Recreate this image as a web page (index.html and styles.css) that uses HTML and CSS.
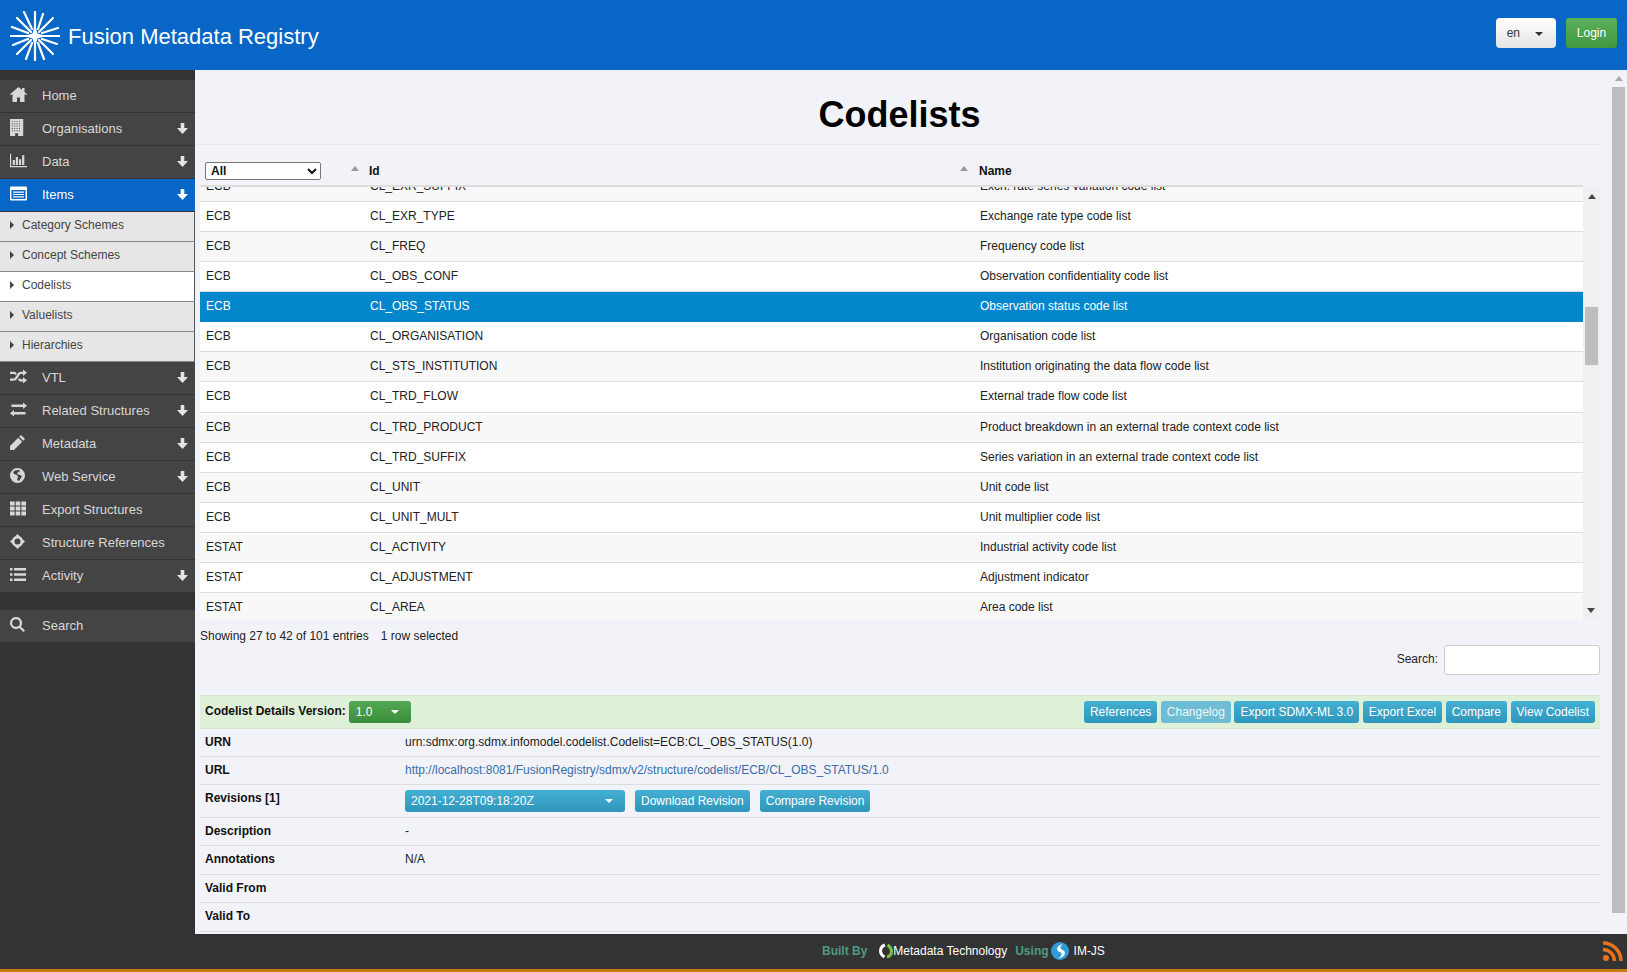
FILE: index.html
```html
<!DOCTYPE html>
<html lang="en">
<head>
<meta charset="UTF-8">
<title>Fusion Metadata Registry</title>
<link rel="stylesheet" href="styles.css">
</head>
<body>
<svg class="sprite" width="0" height="0">
  <symbol id="i-home" viewBox="0 0 17 15" preserveAspectRatio="xMinYMid meet"><path d="M8.500 0 0 7.300l.9 1L2.500 7V15H7v-4.500h3V15h4.500V7l1.600 1.300.9-1-2.500-2.200V1H12v2z"/></symbol>
  <symbol id="i-building" viewBox="0 0 14 18" preserveAspectRatio="xMinYMid meet"><path fill-rule="evenodd" d="M0 0h14v18H0zM2 2v1h1V2zm2.500 0v1h1V2zm2.500 0v1h1V2zm2.500 0v1h1V2zM2 4.500v1h1v-1zm2.500 0v1h1v-1zm2.500 0v1h1v-1zm2.500 0v1h1v-1zM2 7v1h1V7zm2.500 0v1h1V7zM7 7v1h1V7zm2.500 0v1h1V7zM2 9.500v1h1v-1zm2.500 0v1h1v-1zm2.500 0v1h1v-1zm2.500 0v1h1v-1zM2 12v1h1v-1zm2.500 0v1h1v-1zm2.500 0v1h1v-1zm2.500 0v1h1v-1zM5.500 15v3h3v-3z"/></symbol>
  <symbol id="i-chart" viewBox="0 0 19 15" preserveAspectRatio="xMinYMid meet"><path d="M0 0h1.300v13.700H19V15H0zM3 7h2.500v5.500H3zM6.500 3.500H9v9H6.500zM10 6h2.500v6.500H10zM13.500 1.500H16v11h-2.500z"/></symbol>
  <symbol id="i-listalt" viewBox="0 0 17 14" preserveAspectRatio="xMinYMid meet"><path fill-rule="evenodd" d="M1 0h15a1 1 0 0 1 1 1v12a1 1 0 0 1-1 1H1a1 1 0 0 1-1-1V1a1 1 0 0 1 1-1zM1.500 3.500V12.500h14V3.500zM3 5h11v1.200H3zM3 7.400h11v1.200H3zM3 9.800h11V11H3z"/></symbol>
  <symbol id="i-random" viewBox="0 0 17 14" preserveAspectRatio="xMinYMid meet"><path d="M13 0l4 3.200-4 3.300V4.500h-1.700c-1 0-1.500.6-2.100 1.500L7.500 8.800C6.600 10.200 5.500 11.300 3.800 11.300H0V9h3.500c.9 0 1.400-.6 2-1.500L7.200 4.700C8.100 3.300 9.200 2.200 11 2.200h2zM0 2.200h3.800c1.300 0 2.200.6 3 1.500L5.400 5.700C5 5 4.400 4.500 3.500 4.500H0zM13 7.500l4 3.200L13 14v-2h-2c-1.300 0-2.200-.6-3-1.500l1.400-2c.4.700 1 1.200 1.900 1.200H13z"/></symbol>
  <symbol id="i-exchange" viewBox="0 0 17 14" preserveAspectRatio="xMinYMid meet"><path d="M13 0l4 3.200-4 3.200V4.500H1.500V2H13zM4 7.500v1.900h11.500v2.500H4V14L0 10.700z"/></symbol>
  <symbol id="i-pencil" viewBox="0 0 17 15" preserveAspectRatio="xMinYMid meet"><path d="M11 0l4 4-1.800 1.800-4-4zM8.200 2.800l4 4L4 15H0v-4z"/></symbol>
  <symbol id="i-globe" viewBox="0 0 17 15" preserveAspectRatio="xMinYMid meet"><path fill-rule="evenodd" d="M7.500 0a7.500 7.500 0 1 1 0 15 7.500 7.500 0 0 1 0-15zM5 2.500 3 4l1 2 3 1 1 2-1 3 2 1 2-3 1-2-2-1-3-1 1-2 2-.5L9 1.800z"/></symbol>
  <symbol id="i-th" viewBox="0 0 17 14" preserveAspectRatio="xMinYMid meet"><path d="M0 0h4.600v4H0zM5.700 0h4.600v4H5.700zM11.400 0H16v4h-4.600zM0 5h4.600v4H0zM5.700 5h4.600v4H5.700zM11.400 5H16v4h-4.600zM0 10h4.600v4H0zM5.700 10h4.600v4H5.700zM11.400 10H16v4h-4.600z"/></symbol>
  <symbol id="i-move" viewBox="0 0 17 15" preserveAspectRatio="xMinYMid meet"><path fill-rule="evenodd" d="M7.500 0l2.200 2.300A5.500 5.500 0 0 1 12.700 5.300L15 7.500l-2.300 2.200a5.500 5.500 0 0 1-3 3L7.500 15l-2.200-2.300a5.500 5.500 0 0 1-3-3L0 7.500l2.300-2.200a5.500 5.500 0 0 1 3-3zM7.500 4.500a3 3 0 1 0 0 6 3 3 0 0 0 0-6z"/></symbol>
  <symbol id="i-list" viewBox="0 0 17 13" preserveAspectRatio="xMinYMid meet"><path d="M0 0h2.500v2.500H0zM4 0h12v2.500H4zM0 5.200h2.500v2.500H0zM4 5.200h12v2.500H4zM0 10.500h2.500V13H0zM4 10.500h12V13H4z"/></symbol>
  <symbol id="i-search" viewBox="0 0 17 15" preserveAspectRatio="xMinYMid meet"><path fill-rule="evenodd" d="M6 0a6 6 0 0 1 4.900 9.500L15 13.400 13.400 15l-4-4.100A6 6 0 1 1 6 0zm0 2.200a3.800 3.800 0 1 0 0 7.600 3.800 3.800 0 0 0 0-7.600z"/></symbol>
  <symbol id="i-down" viewBox="0 0 11 11"><path d="M3.700 0h3.600v5H11l-5.500 6L0 5h3.700z"/></symbol>
</svg>

<div class="header">
  <div class="brand">
    <svg class="logo" viewBox="0 0 50 50">
      <g stroke="#fff" stroke-width="2.200" stroke-linecap="round">
        <path d="M25 20V0M25 30V50M20 25H0M30 25H50"/>
        <path d="M21 21 7 7M29 21 43 7M21 29 7 43M29 29 43 43"/>
        <path d="M22 18 14 1M28 18 33 3M18 22 2 16M32 22 48 17M18 28 3 34M32 28 47 33M22 32 16 48M28 32 34 48"/>
      </g>
      <path fill="#fff" d="M25 14 27.500 22.500 36 25 27.500 27.500 25 36 22.500 27.500 14 25 22.500 22.500z"/>
    </svg>
    <span class="brand-name">Fusion Metadata Registry</span>
  </div>
  <div class="header-actions">
    <button class="lang-btn">en <span class="caret caret-dark"></span></button>
    <button class="login-btn">Login</button>
  </div>
</div>

<div class="layout">
  <div class="sidebar">
    <a class="nav-item"><svg class="nav-icon"><use href="#i-home"/></svg>Home</a>
    <a class="nav-item"><svg class="nav-icon"><use href="#i-building"/></svg>Organisations<svg class="nav-arrow"><use href="#i-down"/></svg></a>
    <a class="nav-item"><svg class="nav-icon"><use href="#i-chart"/></svg>Data<svg class="nav-arrow"><use href="#i-down"/></svg></a>
    <a class="nav-item active"><svg class="nav-icon"><use href="#i-listalt"/></svg>Items<svg class="nav-arrow"><use href="#i-down"/></svg></a>
    <a class="sub-item">Category Schemes</a>
    <a class="sub-item">Concept Schemes</a>
    <a class="sub-item current">Codelists</a>
    <a class="sub-item">Valuelists</a>
    <a class="sub-item">Hierarchies</a>
    <a class="nav-item"><svg class="nav-icon"><use href="#i-random"/></svg>VTL<svg class="nav-arrow"><use href="#i-down"/></svg></a>
    <a class="nav-item"><svg class="nav-icon"><use href="#i-exchange"/></svg>Related Structures<svg class="nav-arrow"><use href="#i-down"/></svg></a>
    <a class="nav-item"><svg class="nav-icon"><use href="#i-pencil"/></svg>Metadata<svg class="nav-arrow"><use href="#i-down"/></svg></a>
    <a class="nav-item"><svg class="nav-icon"><use href="#i-globe"/></svg>Web Service<svg class="nav-arrow"><use href="#i-down"/></svg></a>
    <a class="nav-item"><svg class="nav-icon"><use href="#i-th"/></svg>Export Structures</a>
    <a class="nav-item"><svg class="nav-icon"><use href="#i-move"/></svg>Structure References</a>
    <a class="nav-item"><svg class="nav-icon"><use href="#i-list"/></svg>Activity<svg class="nav-arrow"><use href="#i-down"/></svg></a>
    <a class="nav-item nav-search"><svg class="nav-icon"><use href="#i-search"/></svg>Search</a>
  </div>

  <div class="main">
    <div class="content">
      <h1 class="page-title">Codelists</h1>

      <div class="table-wrap">
        <div class="table-area">
          <div class="table-head">
            <div class="head-cell">
              <select class="type-filter"><option>All</option></select>
              <span class="sort-up"></span>
            </div>
            <div class="head-cell">Id<span class="sort-up"></span></div>
            <div class="head-cell head-name">Name</div>
          </div>
          <div class="table-body">
            <div class="rows">
              <div class="row alt"><span>ECB</span><span>CL_EXR_SUFFIX</span><span>Exch. rate series variation code list</span></div>
              <div class="row"><span>ECB</span><span>CL_EXR_TYPE</span><span>Exchange rate type code list</span></div>
              <div class="row alt"><span>ECB</span><span>CL_FREQ</span><span>Frequency code list</span></div>
              <div class="row"><span>ECB</span><span>CL_OBS_CONF</span><span>Observation confidentiality code list</span></div>
              <div class="row selected"><span>ECB</span><span>CL_OBS_STATUS</span><span>Observation status code list</span></div>
              <div class="row"><span>ECB</span><span>CL_ORGANISATION</span><span>Organisation code list</span></div>
              <div class="row alt"><span>ECB</span><span>CL_STS_INSTITUTION</span><span>Institution originating the data flow code list</span></div>
              <div class="row row-tall"><span>ECB</span><span>CL_TRD_FLOW</span><span>External trade flow code list</span></div>
              <div class="row alt"><span>ECB</span><span>CL_TRD_PRODUCT</span><span>Product breakdown in an external trade context code list</span></div>
              <div class="row"><span>ECB</span><span>CL_TRD_SUFFIX</span><span>Series variation in an external trade context code list</span></div>
              <div class="row alt"><span>ECB</span><span>CL_UNIT</span><span>Unit code list</span></div>
              <div class="row"><span>ECB</span><span>CL_UNIT_MULT</span><span>Unit multiplier code list</span></div>
              <div class="row alt"><span>ESTAT</span><span>CL_ACTIVITY</span><span>Industrial activity code list</span></div>
              <div class="row"><span>ESTAT</span><span>CL_ADJUSTMENT</span><span>Adjustment indicator</span></div>
              <div class="row alt"><span>ESTAT</span><span>CL_AREA</span><span>Area code list</span></div>
            </div>
          </div>
        </div>
        <div class="table-scroll">
          <span class="arrow-up"></span>
          <span class="table-thumb"></span>
          <span class="arrow-down"></span>
        </div>
      </div>

      <div class="table-info">
        <div class="info-line">Showing 27 to 42 of 101 entries<span class="info-selected">1 row selected</span></div>
        <div class="search-line">
          <label class="search-label" for="tableSearch">Search:</label>
          <input id="tableSearch" class="search-input" type="text">
        </div>
      </div>

      <div class="details-bar">
        <div class="details-title">
          <b>Codelist Details Version:</b>
          <button class="btn btn-green version-btn">1.0<span class="caret"></span></button>
        </div>
        <div class="details-actions">
          <button class="btn btn-info">References</button>
          <button class="btn btn-info btn-disabled">Changelog</button>
          <button class="btn btn-info">Export SDMX-ML 3.0</button>
          <button class="btn btn-info">Export Excel</button>
          <button class="btn btn-info">Compare</button>
          <button class="btn btn-info">View Codelist</button>
        </div>
      </div>
      <div class="detail-row"><b>URN</b><span>urn:sdmx:org.sdmx.infomodel.codelist.Codelist=ECB:CL_OBS_STATUS(1.0)</span></div>
      <div class="detail-row"><b>URL</b><a class="detail-link">http://localhost:8081/FusionRegistry/sdmx/v2/structure/codelist/ECB/CL_OBS_STATUS/1.0</a></div>
      <div class="detail-row detail-revisions"><b>Revisions [1]</b>
        <div class="revision-actions">
          <button class="btn btn-info revision-btn">2021-12-28T09:18:20Z<span class="caret"></span></button>
          <button class="btn btn-info">Download Revision</button>
          <button class="btn btn-info">Compare Revision</button>
        </div>
      </div>
      <div class="detail-row"><b>Description</b><span>-</span></div>
      <div class="detail-row detail-tall"><b>Annotations</b><span>N/A</span></div>
      <div class="detail-row"><b>Valid From</b><span></span></div>
      <div class="detail-row detail-tall"><b>Valid To</b><span></span></div>
    </div>

    <div class="page-scroll">
      <span class="page-arrow"></span>
      <span class="page-thumb"></span>
    </div>
  </div>
</div>

<div class="footer">
  <span class="footer-muted">Built By</span>
  <svg class="mt-logo" viewBox="0 0 14 16">
    <path fill="none" stroke="#fff" stroke-width="3" d="M6 2C2.500 3 1.500 5.500 1.500 8S3 12.500 5.500 14"/>
    <path fill="none" stroke="#7ac143" stroke-width="3" d="M8 14c3.500-1 4.500-3.500 4.500-6S11 3.500 8.500 2"/>
  </svg>
  <span class="footer-name">Metadata Technology</span>
  <span class="footer-muted footer-using">Using</span>
  <svg class="imjs-logo" viewBox="0 0 18 18">
    <circle cx="9" cy="9" r="9" fill="#2f9bd9"/>
    <path fill="#fff" d="M12.500 1.500C7.500 3 5 6 6.500 8.500c1 1.600 3.500 1.500 4 3 .4 1.500-1 3.700-3.500 5 5-.5 8-4 6.500-7-.9-1.800-3.500-1.800-4-3.200-.4-1.300.8-3 2.500-4.800z"/>
  </svg>
  <span class="footer-name">IM-JS</span>
  <svg class="rss" viewBox="0 0 20 20">
    <circle cx="3" cy="17" r="3" fill="#e8731c"/>
    <path fill="none" stroke="#e8731c" stroke-width="3.500" d="M0 8.500A11.500 11.500 0 0 1 11.500 20M0 2A18 18 0 0 1 18 20"/>
  </svg>
</div>
</body>
</html>
```

FILE: styles.css
```css
:root {
  --blue: #0866c6;
  --dark: #333;
  --nav-bg: #444;
  --page-bg: #f2f3f8;
  --line: #ddd;
}

* {
  box-sizing: border-box;
}

html, body {
  height: 100%;
}

body {
  margin: 0;
  height: 972px;
  overflow: hidden;
  display: flex;
  flex-direction: column;
  font-family: "Liberation Sans", Arial, sans-serif;
  font-size: 12px;
  color: #222;
  background: var(--dark);
}

.sprite {
  position: absolute;
}

button {
  font-family: inherit;
  cursor: pointer;
}

/* header */
.header {
  height: 70px;
  flex: none;
  display: flex;
  justify-content: space-between;
  align-items: center;
  padding: 0 10px;
  background: var(--blue);
}

.brand {
  display: flex;
  align-items: center;
}

.logo {
  width: 50px;
  height: 50px;
  margin-top: 2px;
}

.brand-name {
  margin-left: 8px;
  padding-top: 3px;
  font-size: 22px;
  color: #fff;
}

.header-actions {
  display: flex;
  gap: 10px;
  margin-top: -4px;
}

.lang-btn {
  width: 60px;
  height: 30px;
  padding: 0 8px 0 6px;
  border: 0;
  border-radius: 4px;
  font-size: 12px;
  color: #333;
  background: linear-gradient(#fff, #e4e4e4);
}

.lang-btn .caret {
  margin-left: 12px;
}

.login-btn {
  width: 51px;
  height: 30px;
  border: 0;
  border-radius: 3px;
  font-size: 12px;
  color: #fff;
  background: linear-gradient(#5bb05b, #41963f);
}

.caret {
  display: inline-block;
  width: 0;
  height: 0;
  vertical-align: middle;
  border-left: 4px solid transparent;
  border-right: 4px solid transparent;
  border-top: 4px solid #fff;
}

.caret-dark {
  border-top-color: #333;
}

/* sidebar */
.layout {
  flex: 1;
  min-height: 0;
  display: flex;
}

.sidebar {
  width: 195px;
  flex: none;
  padding-top: 10px;
  background: var(--dark);
}

.nav-item {
  height: 33px;
  display: flex;
  align-items: center;
  padding: 0 7px 2px 42px;
  position: relative;
  font-size: 13px;
  color: #d8d8d8;
  background: var(--nav-bg);
  border-bottom: 1px solid var(--dark);
}

.nav-item.active {
  color: #fff;
  background: var(--blue);
}

.nav-search {
  margin-top: 17px;
}

.nav-icon {
  position: absolute;
  left: 10px;
  top: 6px;
  width: 17px;
  height: 17px;
  fill: #d8d8d8;
}

.active .nav-icon,
.active .nav-arrow {
  fill: #fff;
}

.nav-arrow {
  width: 11px;
  height: 11px;
  margin-left: auto;
  fill: #e4e4e4;
}

.sub-item {
  height: 30px;
  display: flex;
  align-items: center;
  padding: 0 0 3px 22px;
  position: relative;
  color: #444;
  background: #e6e6e6;
  border-bottom: 1px solid #888;
  border-right: 1px solid #555;
}

.sub-item::before {
  content: "";
  position: absolute;
  left: 10px;
  top: 9px;
  border-top: 4px solid transparent;
  border-bottom: 4px solid transparent;
  border-left: 4px solid #444;
}

.sub-item.current {
  background: #fff;
}

/* main */
.main {
  flex: 1;
  min-width: 0;
  display: flex;
  background: var(--page-bg);
}

.content {
  flex: 1;
  min-width: 0;
  padding-left: 5px;
}

.page-title {
  height: 75px;
  margin: 0 0 0 -5px;
  padding: 24px 0 0 4px;
  text-align: center;
  font-size: 36px;
  line-height: 42px;
  color: #000;
  border-bottom: 1px solid #e9eaf0;
}

.page-scroll {
  width: 27px;
  flex: none;
  padding: 6px 2px 0 12px;
  display: flex;
  flex-direction: column;
  align-items: center;
}

.page-arrow {
  border-left: 4px solid transparent;
  border-right: 4px solid transparent;
  border-bottom: 5px solid #aaa;
}

.page-thumb {
  width: 13px;
  height: 826px;
  margin-top: 6px;
  background: #bdbdbd;
}

/* codelist table */
.table-wrap {
  display: flex;
  height: 475px;
}

.table-area {
  flex: 1;
  min-width: 0;
}

.table-head {
  height: 42px;
  display: grid;
  grid-template-columns: 164px 609px 1fr;
  align-items: end;
  padding: 0 0 5px 5px;
  font-weight: bold;
  color: #111;
  border-bottom: 2px solid var(--line);
}

.head-cell {
  display: flex;
  align-items: center;
  height: 18px;
}

.head-name {
  padding-left: 1px;
}

.sort-up {
  margin: -6px 10px 0 auto;
  border-left: 4px solid transparent;
  border-right: 4px solid transparent;
  border-bottom: 5px solid #999;
}

.type-filter {
  width: 116px;
  height: 18px;
  padding: 0 0 0 1px;
  font-family: inherit;
  font-size: 12px;
  font-weight: bold;
  color: #111;
  background: #fff;
  border: 1px solid #777;
  border-radius: 2px;
}

.table-body {
  height: 433px;
  overflow: hidden;
}

.rows {
  margin-top: -15px;
}

.row {
  height: 30px;
  display: grid;
  grid-template-columns: 164px 610px 1fr;
  align-items: center;
  padding: 0 0 2px 6px;
  color: #222;
  background: #fff;
  border-bottom: 1px solid var(--line);
}

.row.alt {
  background: #f8f8f9;
}

.row-tall {
  height: 31px;
}

.row.selected {
  color: #fff;
  background: #0486cc;
  border-bottom-color: #0486cc;
}

.table-scroll {
  width: 17px;
  flex: none;
  margin-top: 42px;
  padding-top: 7px;
  position: relative;
  display: flex;
  flex-direction: column;
  align-items: center;
  background: #f0f0f2;
}

.arrow-up {
  border-left: 4px solid transparent;
  border-right: 4px solid transparent;
  border-bottom: 5px solid #444;
}

.arrow-down {
  position: absolute;
  bottom: 7px;
  left: 4px;
  border-left: 4px solid transparent;
  border-right: 4px solid transparent;
  border-top: 5px solid #444;
}

.table-thumb {
  width: 13px;
  height: 58px;
  margin-top: 108px;
  background: #bdbdbd;
}

.table-info {
  height: 75px;
  padding-top: 8px;
}

.info-line {
  line-height: 16px;
}

.info-selected {
  margin-left: 12px;
}

.search-line {
  display: flex;
  justify-content: flex-end;
  align-items: center;
  gap: 6px;
  margin-top: 1px;
}

.search-label {
  margin-bottom: 2px;
}

.search-input {
  width: 156px;
  height: 30px;
  background: #fff;
  border: 1px solid #ccc;
  border-radius: 3px;
}

/* details */
.details-bar {
  height: 34px;
  display: flex;
  justify-content: space-between;
  align-items: center;
  padding: 0 5px;
  background: #dff0d8;
  border-top: 1px solid #d6e6cf;
  border-bottom: 1px solid #d6e6cf;
}

.details-title {
  display: flex;
  align-items: center;
  gap: 3px;
  color: #111;
}

.details-title b {
  margin-bottom: 2px;
}

.details-actions {
  display: flex;
  gap: 3.500px;
}

.btn {
  height: 22px;
  padding: 0 6px;
  border: 0;
  border-radius: 3px;
  font-size: 12px;
  color: #fff;
}

.btn-info {
  background: linear-gradient(#45b0d3, #2e96bb);
}

.btn-disabled {
  color: #eef7fa;
  background: #6fbdd4;
}

.btn-green {
  background: linear-gradient(#52a952, #3b8d3d);
}

.version-btn {
  width: 62px;
  display: flex;
  justify-content: space-between;
  align-items: center;
  padding: 0 12px 0 7px;
}

.detail-row {
  height: 28px;
  display: grid;
  grid-template-columns: 200px 1fr;
  align-items: center;
  padding: 0 0 2px 5px;
  color: #222;
  border-bottom: 1px solid var(--line);
}

.detail-row b {
  color: #111;
}

.detail-tall {
  height: 29px;
}

.detail-revisions {
  height: 33px;
  align-items: start;
  padding-top: 5px;
}

.detail-revisions b {
  margin-top: 1px;
}

.detail-link {
  color: #3a6ca8;
}

.revision-actions {
  display: flex;
  gap: 10px;
}

.revision-btn {
  width: 220px;
  display: flex;
  justify-content: space-between;
  align-items: center;
  padding: 0 12px 0 6px;
}

/* footer */
.footer {
  height: 38px;
  flex: none;
  display: flex;
  align-items: center;
  padding: 0 4px 2px 822px;
  color: #fff;
  background: var(--dark);
  border-bottom: 3px solid #c77a10;
}

.footer-muted {
  font-weight: bold;
  color: #4f9a86;
}

.footer-using {
  margin-left: 8px;
}

.mt-logo {
  width: 14px;
  height: 16px;
  margin-left: 12px;
}

.imjs-logo {
  width: 18px;
  height: 18px;
  margin: 0 5px 0 2px;
}

.rss {
  width: 20px;
  height: 20px;
  margin-left: auto;
}
```
